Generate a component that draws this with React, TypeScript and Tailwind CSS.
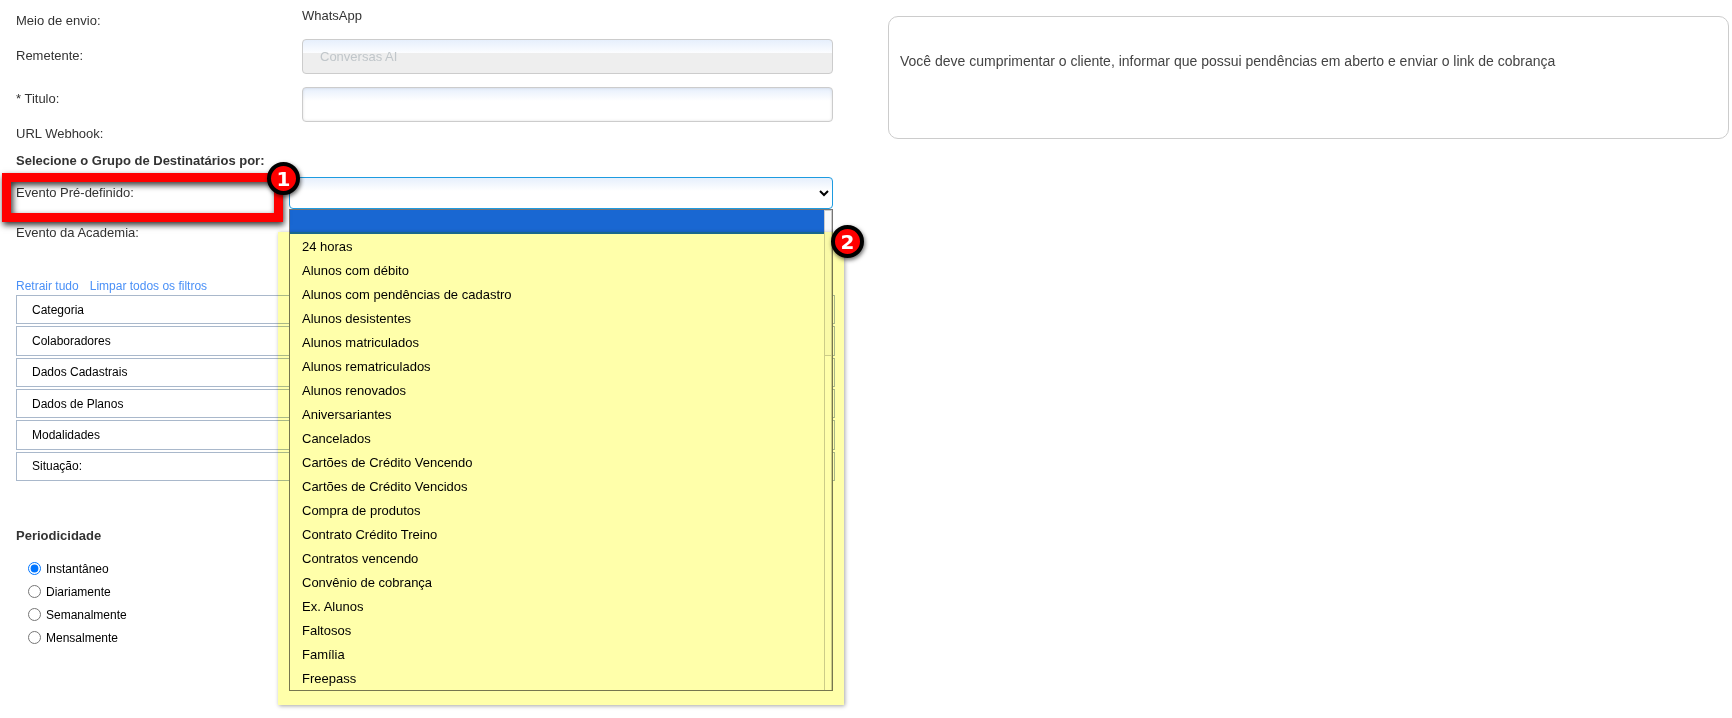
import { useState } from "react";

const eventos = [
    "24 horas",
    "Alunos com débito",
    "Alunos com pendências de cadastro",
    "Alunos desistentes",
    "Alunos matriculados",
    "Alunos rematriculados",
    "Alunos renovados",
    "Aniversariantes",
    "Cancelados",
    "Cartões de Crédito Vencendo",
    "Cartões de Crédito Vencidos",
    "Compra de produtos",
    "Contrato Crédito Treino",
    "Contratos vencendo",
    "Convênio de cobrança",
    "Ex. Alunos",
    "Faltosos",
    "Família",
    "Freepass",
];

const filtros = ["Categoria", "Colaboradores", "Dados Cadastrais", "Dados de Planos", "Modalidades", "Situação:"];

const periodos = ["Instantâneo", "Diariamente", "Semanalmente", "Mensalmente"];

function Marker({ n, className }: { n: number; className: string }) {
    return (
        <span
            className={`absolute z-30 flex size-[33px] items-center justify-center rounded-full border-4 border-black bg-[#ff0000] font-['DejaVu_Sans',sans-serif] text-xl leading-none font-bold text-white shadow-[1px_2px_4px_rgba(0,0,0,0.6)] ${className}`}
        >
            {n}
        </span>
    );
}

export default function App() {
    const [periodo, setPeriodo] = useState("Instantâneo");
    const [titulo, setTitulo] = useState("");
    const [evento, setEvento] = useState("");

    return (
        <main className="grid min-h-screen grid-cols-[819fr_841fr] items-start gap-[53px] bg-white pt-[5px] pr-[3px] pl-4 font-['Liberation_Sans',Arial,sans-serif] text-[13px] leading-[22px] text-[#333]">
            <form>
                <div className="grid h-[34px] grid-cols-[286px_1fr]">
                    <span className="pt-[5px]">Meio de envio:</span>
                    <span>WhatsApp</span>
                </div>
                <div className="grid h-12 grid-cols-[286px_1fr] items-start pr-0.5">
                    <label htmlFor="remetente" className="pt-1.5">Remetente:</label>
                    <input
                        id="remetente"
                        type="text"
                        disabled
                        value="Conversas AI"
                        className="h-[35px] w-full rounded border border-[#ccc] bg-[#eee] bg-[linear-gradient(#e6effc,#fcfdff)] bg-[length:100%_13px] bg-no-repeat px-[17px] text-[#c0c6ca]"
                    />
                </div>
                <div className="grid h-9 grid-cols-[286px_1fr] items-start pr-0.5">
                    <label htmlFor="titulo" className="pt-px">* Titulo:</label>
                    <input
                        id="titulo"
                        type="text"
                        value={titulo}
                        onChange={(e) => setTitulo(e.target.value)}
                        className="h-[35px] w-full rounded border border-[#ccc] bg-white bg-[linear-gradient(#e6effc,#ffffff)] bg-[length:100%_13px] bg-no-repeat px-[17px] shadow-[inset_0_0_3px_rgba(0,0,0,0.12)] outline-none"
                    />
                </div>
                <p>URL Webhook:</p>
                <h2 className="mt-[5px] font-bold">Selecione o Grupo de Destinatários por:</h2>

                <div className="relative mt-[5px] grid h-8 grid-cols-[273px_1fr] pr-0.5">
                    <label htmlFor="evento" className="pt-[5px]">Evento Pré-definido:</label>
                    <div className="absolute -top-1 -left-3.5 z-20 h-[49px] w-[281px] border-[9px] border-[#ff0000] shadow-[1px_3px_6px_rgba(0,0,0,0.8),inset_2px_3px_6px_rgba(0,0,0,0.8)]"></div>
                    <Marker n={1} className="-top-[15px] left-[251px]" />

                    <div className="relative">
                        <select
                            id="evento"
                            value={evento}
                            onChange={(e) => setEvento(e.target.value)}
                            className="block h-8 w-full rounded border border-[#1d9be0] bg-white bg-[linear-gradient(#e6effc,#ffffff)] bg-[length:100%_13px] bg-no-repeat text-black outline-none"
                        >
                            <option value=""></option>
                            {eventos.map((item) => (
                                <option key={item}>{item}</option>
                            ))}
                        </select>

                        {/* open list */}
                        <div className="absolute inset-x-0 top-8 z-10 flex border border-[#767676] bg-white text-black">
                            <ul role="listbox" className="flex-1">
                                <li role="option" aria-selected="true" className="h-6 bg-[#1967d2]"></li>
                                {eventos.map((item) => (
                                    <li key={item} role="option" aria-selected="false" className="h-6 pt-0.5 pl-3">
                                        {item}
                                    </li>
                                ))}
                            </ul>
                            <div className="w-2 border-x border-[#ccc]">
                                <div className="h-[146px] border-y border-[#ccc] bg-[#fafafa]"></div>
                            </div>
                        </div>

                        {/* highlighter */}
                        <div className="absolute top-[55px] -right-[11px] -left-[11px] z-10 h-[473px] bg-[#ffffaa] mix-blend-multiply shadow-[1px_1px_4px_rgba(0,0,0,0.35)]"></div>
                        <Marker n={2} className="top-12 -right-[31px]" />
                    </div>
                </div>

                <p className="mt-[13px]">Evento da Academia:</p>

                <div className="mt-[33px] flex gap-[11px] text-xs leading-[18px] text-[#4a90f7]">
                    <a href="#">Retrair tudo</a>
                    <a href="#">Limpar todos os filtros</a>
                </div>
                <div className="flex h-[186px] flex-col gap-0.5 text-xs text-black">
                    {filtros.map((item) => (
                        <button key={item} type="button" className="flex flex-1 items-center border border-[#a9b8cb] px-[15px]">
                            {item}
                        </button>
                    ))}
                </div>

                <fieldset className="mt-11">
                    <legend className="font-bold">Periodicidade</legend>
                    <div className="mt-2.5 pl-3 text-xs text-black">
                        {periodos.map((item) => (
                            <label key={item} className="flex h-[23px] items-center gap-[5px]">
                                <input
                                    type="radio"
                                    name="periodo"
                                    checked={periodo === item}
                                    onChange={() => setPeriodo(item)}
                                    className="size-[13px]"
                                />
                                {item}
                            </label>
                        ))}
                    </div>
                </fieldset>
            </form>

            <aside className="mt-[11px] h-[123px] rounded-[10px] border border-[#ccc] px-[11px] pt-[33px] text-sm leading-[22px] text-[#444]">
                Você deve cumprimentar o cliente, informar que possui pendências em aberto e enviar o link de cobrança
            </aside>
        </main>
    );
}
